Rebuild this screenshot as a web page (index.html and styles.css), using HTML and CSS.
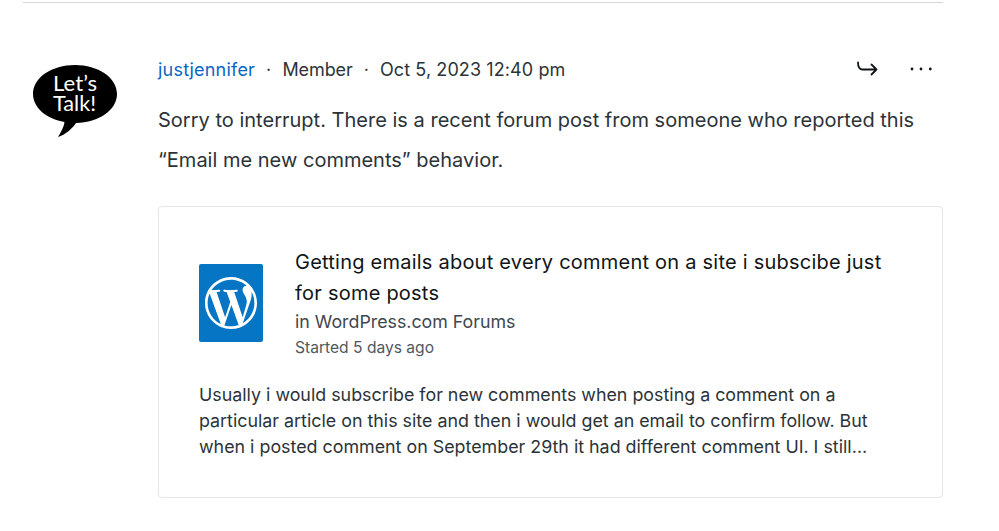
FILE: index.html
```html
<!DOCTYPE html>
<html lang="en">
<head>
<meta charset="utf-8">
<title>Comment</title>
<link rel="stylesheet" href="styles.css">
</head>
<body>
<main class="thread">
  <article class="comment">
    <div class="avatar">
      <svg class="avatar-svg" width="86" height="74" viewBox="0 0 86 74">
        <path class="bubble" d="M43 0C66 0 85 12.500 85 29C85 45 67 57.500 44 58C41 63 33 70 26 72C29 67 32 62 32.500 57C15 54 1 43 1 29C1 12.500 20 0 43 0Z"/>
        <text class="avatar-text" x="21" y="26" textLength="44" lengthAdjust="spacingAndGlyphs">Let’s</text>
        <text class="avatar-text" x="21" y="46" textLength="43" lengthAdjust="spacingAndGlyphs">Talk!</text>
      </svg>
    </div>
    <div class="body">
      <header class="meta">
        <a class="author" href="#">justjennifer</a>
        <span class="sep">·</span>
        <span class="role">Member</span>
        <span class="sep">·</span>
        <time class="date">Oct 5, 2023 12:40 pm</time>
        <span class="actions">
          <svg class="reply" width="24" height="20" viewBox="0 0 24 20"><path d="M3 3.500C3 8 4 10.500 7.500 10.500H21.500M16.500 5.500L21.500 10.500L16.500 15.500"/></svg>
          <svg class="more" width="26" height="6" viewBox="0 0 26 6"><circle cx="3" cy="3" r="1.400"/><circle cx="12" cy="3" r="1.400"/><circle cx="21.300" cy="3" r="1.400"/></svg>
        </span>
      </header>
      <p class="text">Sorry to interrupt. There is a recent forum post from someone who reported this “Email me new comments” behavior.</p>
      <a class="card" href="#">
        <div class="card-head">
          <div class="site-icon">
            <svg width="52" height="52" viewBox="0 0 24 24"><path d="M21.469 6.825c.84 1.537 1.318 3.3 1.318 5.175 0 3.979-2.156 7.456-5.363 9.325l3.295-9.527c.615-1.54.82-2.771.82-3.864 0-.405-.026-.78-.07-1.11m-7.981.105c.647-.03 1.232-.105 1.232-.105.582-.075.514-.93-.067-.899 0 0-1.755.135-2.88.135-1.064 0-2.85-.15-2.85-.15-.585-.03-.661.855-.075.885 0 0 .54.061 1.125.09l1.68 4.605-2.37 7.08L5.354 6.9c.649-.03 1.234-.1 1.234-.1.585-.075.516-.93-.065-.896 0 0-1.746.138-2.874.138-.2 0-.438-.008-.69-.015C4.911 3.15 8.235 1.215 12 1.215c2.809 0 5.365 1.072 7.286 2.833-.046-.003-.091-.009-.141-.009-1.06 0-1.812.923-1.812 1.914 0 .89.513 1.643 1.06 2.531.411.72.89 1.643.89 2.977 0 .915-.354 1.994-.821 3.479l-1.075 3.585-3.9-11.61.001.014zM12 22.784c-1.059 0-2.081-.153-3.048-.437l3.237-9.406 3.315 9.087c.024.053.05.101.078.149-1.12.393-2.325.609-3.582.609M1.211 12c0-1.564.336-3.05.935-4.39L7.29 21.709C3.694 19.96 1.212 16.271 1.211 12M12 0C5.385 0 0 5.385 0 12s5.385 12 12 12 12-5.385 12-12S18.615 0 12 0"/></svg>
          </div>
          <div class="card-info">
            <h3 class="card-title">Getting emails about every comment on a site i subscibe just for some posts</h3>
            <div class="card-forum">in WordPress.com Forums</div>
            <div class="card-started">Started 5 days ago</div>
          </div>
        </div>
        <p class="card-excerpt">Usually i would subscribe for new comments when posting a comment on a particular article on this site and then i would get an email to confirm follow. But when i posted comment on September 29th it had different comment UI. I still…</p>
      </a>
    </div>
  </article>
</main>
</body>
</html>
```
FILE: styles.css
```css
* { box-sizing: border-box; }
html, body { margin: 0; padding: 0; background: #fff; }
body {
  font-family: Inter, "Liberation Sans", sans-serif;
  color: #1d2327;
  overflow: hidden;
  height: 531px;
}
.thread {
  width: 920px;
  margin-left: 23px;
  margin-top: 2px;
  border-top: 1px solid #d5d7da;
}
.comment {
  display: flex;
  padding: 47px 0 0 9px;
}
.avatar { width: 126px; flex: none; padding-top: 15px; }
.avatar-svg { display: block; }
.bubble { fill: #000; }
.avatar-text {
  font-family: Lato, sans-serif;
  font-size: 22px;
  font-weight: 400;
  fill: #fff;
}
.body { flex: 1; min-width: 0; }
.meta {
  display: flex;
  align-items: center;
  height: 38px;
  font-size: 18px;
  color: #2c3338;
  letter-spacing: .1px;
}
.author { color: #0b66c3; text-decoration: none; letter-spacing: .22px; }
.role { letter-spacing: -.1px; }
.sep { margin: 0 11px; }
.actions {
  margin-left: auto;
  display: flex;
  align-items: center;
  gap: 30px;
  padding-right: 8px;
}
.reply { fill: none; stroke: #101517; stroke-width: 1.800; stroke-linecap: round; stroke-linejoin: round; }
.more { fill: #101517; }
.text {
  margin: 12px 0 0;
  font-size: 20px;
  line-height: 40px;
  letter-spacing: .01px;
  color: #2c3338;
}
.card {
  display: block;
  margin-top: 26px;
  height: 292px;
  border: 1px solid #e3e5e8;
  border-radius: 4px;
  padding: 38px 40px 0;
  color: inherit;
  text-decoration: none;
}
.card-head { display: flex; align-items: center; gap: 32px; }
.site-icon {
  width: 64px;
  height: 78px;
  flex: none;
  background: #0675c4;
  border-radius: 2px;
  display: flex;
  align-items: center;
  justify-content: center;
}
.site-icon svg { fill: #fff; display: block; }
.card-info { min-width: 0; }
.card-title {
  margin: 2px 0 0;
  font-size: 20px;
  font-weight: 400;
  line-height: 31px;
  letter-spacing: .23px;
  color: #101517;
}
.card-forum { font-size: 17.800px; line-height: 25px; color: #3f4750; }
.card-started { font-size: 15.600px; line-height: 27px; color: #50575e; }
.card-excerpt {
  margin: 21px 0 0;
  font-size: 17.850px;
  line-height: 26px;
  color: #2c3338;
}
```
